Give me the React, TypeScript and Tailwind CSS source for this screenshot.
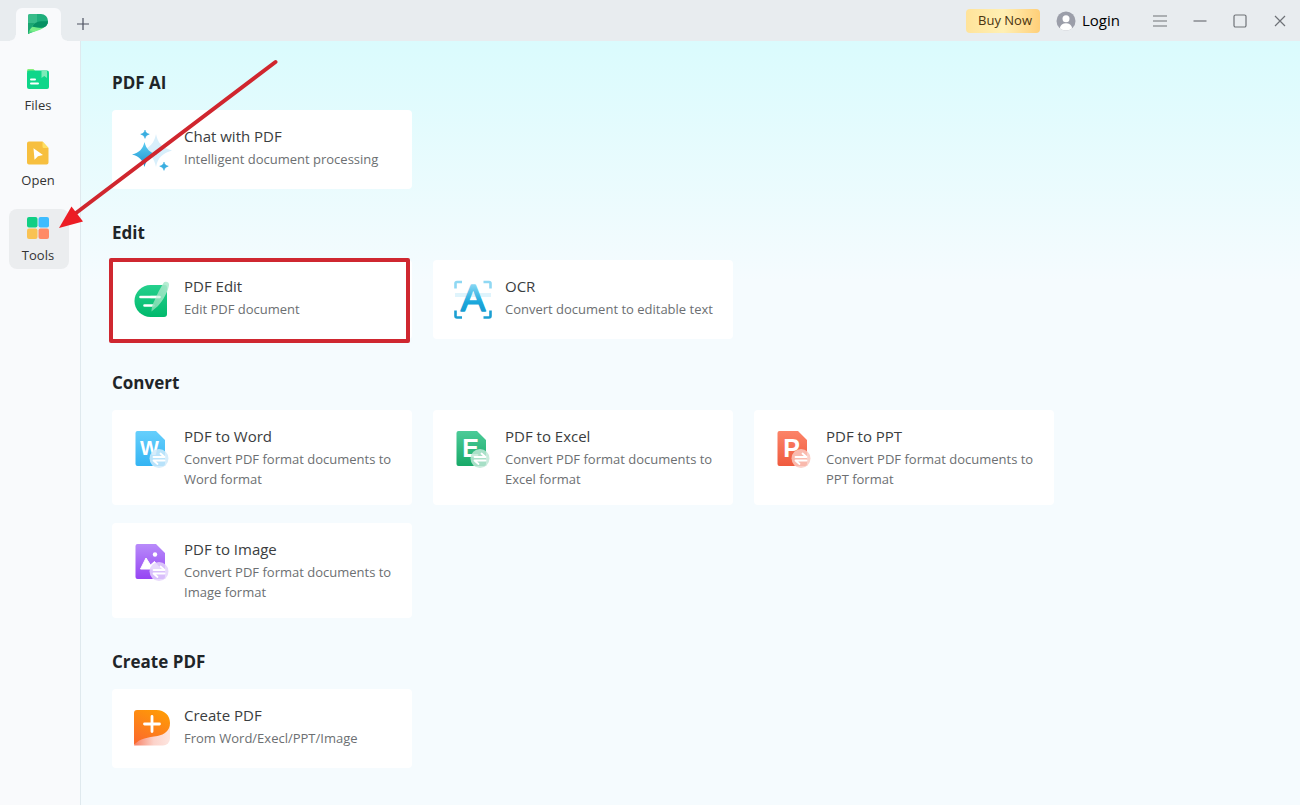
import type { ReactNode } from 'react';
import clsx from 'clsx';

type Tool = {
  title: string;
  description: string;
  icon: ReactNode;
  highlighted?: boolean;
};

type Section = {
  heading: string;
  tools: Tool[];
};

const Logo = () => (
  <svg viewBox="0 0 20 20" className="w-5 h-5" aria-hidden="true">
    <defs>
      <linearGradient id="logo-tail" x1="0" y1="1" x2="1" y2="0">
        <stop offset="0" stopColor="#27c46c" />
        <stop offset=".4" stopColor="#7df08a" />
        <stop offset="1" stopColor="#5fe57f" />
      </linearGradient>
    </defs>
    <path d="M0 20V2a2 2 0 0 1 2-2h11a7 7 0 0 1 7 7c0 3.500-2 5.700-5 6.800z" fill="#1fae7c" />
    <path d="M0 20c1-4 2.500-6 5-7.500 3 .8 7 1.300 11 .9-2 1.600-4.500 2.600-7.500 3.600C5.600 18 2.500 18.500 0 20z" fill="url(#logo-tail)" />
    <path d="M4.500 12.600C6 9 9 7.300 13 7.200h7c-.1 3-2 5.500-4.500 6.300-4 .5-8 .1-11-.9z" fill="#079163" />
    <path d="M0 20V2a2 2 0 0 1 2-2h7v8C5.500 9.500 2.500 13 0 20z" fill="#3fbf8d" opacity=".8" />
    <path d="M0 20V9h7C4 11.500 1.500 15 0 20z" fill="#14a06c" opacity=".8" />
  </svg>
);

const FilesIcon = () => (
  <svg viewBox="0 -1 24 24" className="w-6 h-6" aria-hidden="true">
    <path d="M1 5V3.500C1 2.600 1.600 2 2.500 2h5L10 5z" fill="#86ef7c" />
    <rect x="1" y="3.500" width="22" height="18.500" rx="2" fill="#0fd68a" />
    <path d="M15.500 3.500h5.500V11l-2.700-2-2.800 2z" fill="#7cebb9" />
    <path d="M5 12.500h4M5 16.500h7" stroke="#fff" strokeWidth="2" strokeLinecap="round" />
  </svg>
);

const OpenIcon = () => (
  <svg viewBox="0 0 24 24" className="w-6 h-6" aria-hidden="true">
    <path d="M3 .5h13.500L22.500 7v14.500a2 2 0 0 1-2 2H3a2 2 0 0 1-2-2v-19a2 2 0 0 1 2-2z" fill="#f7bf3f" />
    <path d="M16.500 .5 22.500 7h-4.500a1.500 1.500 0 0 1-1.500-1.500z" fill="#ffdf62" />
    <path d="M7.500 7.200 17 14l-5 1.200-3.500 3.600z" fill="#fff" />
  </svg>
);

const ToolsIcon = () => (
  <svg viewBox="0 0 24 24" className="w-6 h-6" aria-hidden="true">
    <rect x="1" y="1" width="10.500" height="10.500" rx="2" fill="#11cf84" />
    <rect x="12.500" y="1" width="10.500" height="10.500" rx="2" fill="#3ebcff" />
    <rect x="1" y="12.500" width="10.500" height="10.500" rx="2" fill="#f9c254" />
    <rect x="12.500" y="12.500" width="10.500" height="10.500" rx="2" fill="#ff8a66" />
  </svg>
);

const ChatIcon = () => (
  <svg viewBox="0 0 40 44" className="w-10 h-11" aria-hidden="true">
    <defs>
      <linearGradient id="chat-star" x1="0" y1="0" x2="0" y2="1">
        <stop offset="0" stopColor="#5bcdf3" />
        <stop offset="1" stopColor="#1f93cf" />
      </linearGradient>
    </defs>
    <path d="M24 4c1.800 9 6 13.500 16 16.500-10 3-14.200 7.500-16 16.500-1.800-9-6-13.500-14-16.500 8-3 12.200-7.500 14-16.500z" fill="#d8effb" />
    <path d="M12.500 12c1.800 7 5 10.500 12.500 12.500-7.500 2-10.700 5.500-12.500 12.500C10.700 30 7.500 26.500 0 24.500c7.500-2 10.700-5.500 12.500-12.500z" fill="url(#chat-star)" />
    <path d="M13 0c.8 2.600 1.700 3.400 4.300 4.200-2.600.8-3.500 1.600-4.300 4.200-.8-2.600-1.700-3.400-4.300-4.200C11.300 3.400 12.200 2.600 13 0z" fill="#3aaee0" stroke="#3aaee0" strokeWidth=".5" />
    <path d="M32 32c.8 2.600 1.700 3.400 4.300 4.200-2.600.8-3.500 1.600-4.300 4.200-.8-2.600-1.700-3.400-4.300-4.200 2.600-.8 3.500-1.600 4.300-4.200z" fill="#3aaee0" stroke="#3aaee0" strokeWidth=".5" />
  </svg>
);

const EditIcon = () => (
  <svg viewBox="0 0 40 40" className="w-10 h-10" aria-hidden="true">
    <defs>
      <linearGradient id="edit-body" x1="0" y1="0" x2="0" y2="1">
        <stop offset="0" stopColor="#25d08d" />
        <stop offset="1" stopColor="#00b96c" />
      </linearGradient>
      <linearGradient id="edit-pen" x1="1" y1="0" x2="0" y2="1">
        <stop offset="0" stopColor="#b2ecd0" />
        <stop offset="1" stopColor="#7ddcb0" />
      </linearGradient>
    </defs>
    <path d="M18.500 5H33a2 2 0 0 1 2 2v27a3 3 0 0 1-3 3H18.500a16 16 0 0 1 0-32z" fill="url(#edit-body)" />
    <path d="M8.500 17h19M12.500 25.500h9" stroke="#fff" strokeWidth="2.600" strokeLinecap="round" />
    <path d="M31.500 3c1.500-2.500 6.500-1.500 5.500 2.500-1.500 7-6 15-11 20.500l-6.500 5.500c0-4 1-7 3-11 2.500-6 5.500-12 9-17.500z" fill="url(#edit-pen)" opacity=".88" />
    <path d="M19 17h8.500" stroke="#fff" strokeWidth="2.600" strokeLinecap="round" opacity=".6" />
  </svg>
);

const OcrIcon = () => (
  <svg viewBox="0 0 40 40" className="w-10 h-10 overflow-visible" aria-hidden="true">
    <defs>
      <linearGradient id="ocr-letter" gradientUnits="userSpaceOnUse" x1="0" y1="4" x2="0" y2="34">
        <stop offset="0" stopColor="#8ad8f4" />
        <stop offset=".6" stopColor="#1ba8dc" />
        <stop offset="1" stopColor="#1697cd" />
      </linearGradient>
    </defs>
    <rect x="2" y="13" width="36" height="4" fill="#dff4fc" />
    <path d="M2.500 8.500V3.500a1.500 1.500 0 0 1 1.500-1.500h5M30.500 2h5.500a1.500 1.500 0 0 1 1.500 1.500v5" fill="none" stroke="#8fd8f3" strokeWidth="2.600" />
    <path d="M2.500 30.500v5.500a1.500 1.500 0 0 0 1.500 1.500h5M30.500 37.500h5.500a1.500 1.500 0 0 0 1.500-1.500v-5.500" fill="none" stroke="#1b9fd2" strokeWidth="2.600" />
    <text
      x="20"
      y="31"
      textAnchor="middle"
      fontSize="37"
      fontWeight="400"
      fill="url(#ocr-letter)"
      stroke="url(#ocr-letter)"
      strokeWidth="1.400"
      strokeLinejoin="round"
      className="font-['Liberation_Sans',sans-serif]"
    >
      A
    </text>
  </svg>
);

// Sheet with a cut corner and the round "swap" badge, shared by all converters
const ConvertIcon = ({ id, from, to, badge, children }: { id: string; from: string; to: string; badge: string; children: ReactNode }) => (
  <svg viewBox="0 0 40 40" className="w-10 h-10" aria-hidden="true">
    <defs>
      <linearGradient id={id} x1="0" y1="0" x2="0" y2="1">
        <stop offset="0" stopColor={from} />
        <stop offset="1" stopColor={to} />
      </linearGradient>
    </defs>
    <path d="M5.500 1H24l9 9v24a2 2 0 0 1-2 2H5.500a2 2 0 0 1-2-2V3a2 2 0 0 1 2-2z" fill={`url(#${id})`} />
    {children}
    <circle cx="27" cy="28.500" r="9.500" fill={badge} opacity=".85" />
    <path d="M21.500 27h11l-4-3.500M32.500 30.500h-11l4 3.500" fill="none" stroke="#fff" strokeWidth="1.800" strokeLinecap="round" strokeLinejoin="round" />
  </svg>
);

const SheetLetter = ({ size, baseline, children }: { size: number; baseline: number; children: string }) => (
  <text x="17.500" y={baseline} textAnchor="middle" fontSize={size} fontWeight="700" fill="#fff" className="font-['Liberation_Sans',sans-serif]">
    {children}
  </text>
);

const CreateIcon = () => (
  <svg viewBox="0 1 40 40" className="w-10 h-10" aria-hidden="true">
    <defs>
      <linearGradient id="create-body" x1=".7" y1="0" x2=".2" y2="1">
        <stop offset="0" stopColor="#ff9a06" />
        <stop offset="1" stopColor="#fb6a2c" />
      </linearGradient>
      <linearGradient id="create-fold" x1="0" y1="0" x2="1" y2="0">
        <stop offset="0" stopColor="#f77f62" />
        <stop offset=".55" stopColor="#fcd3ca" />
        <stop offset="1" stopColor="#fde6e1" />
      </linearGradient>
    </defs>
    <path d="M2 37.500 9 25l29-8v13.500a7 7 0 0 1-7 7z" fill="url(#create-fold)" />
    <path d="M5 2h19.500C32.500 2 38 7.500 38 15s-5.500 11.500-12.500 13C16 29.500 8 30 2 37V5a3 3 0 0 1 3-3z" fill="url(#create-body)" />
    <path d="M20 8.500v15M12.500 16h15" stroke="#fff" strokeWidth="2.800" strokeLinecap="round" />
  </svg>
);

const sections: Section[] = [
  {
    heading: 'PDF AI',
    tools: [{ title: 'Chat with PDF', description: 'Intelligent document processing', icon: <ChatIcon /> }],
  },
  {
    heading: 'Edit',
    tools: [
      { title: 'PDF Edit', description: 'Edit PDF document', icon: <EditIcon />, highlighted: true },
      { title: 'OCR', description: 'Convert document to editable text', icon: <OcrIcon /> },
    ],
  },
  {
    heading: 'Convert',
    tools: [
      {
        title: 'PDF to Word',
        description: 'Convert PDF format documents to Word format',
        icon: (
          <ConvertIcon id="sheet-word" from="#66cffc" to="#33b4f3" badge="#cfeafa">
            <SheetLetter size={20} baseline={25}>W</SheetLetter>
          </ConvertIcon>
        ),
      },
      {
        title: 'PDF to Excel',
        description: 'Convert PDF format documents to Excel format',
        icon: (
          <ConvertIcon id="sheet-excel" from="#4ccb98" to="#17a968" badge="#bfe8d6">
            <SheetLetter size={25} baseline={27}>E</SheetLetter>
          </ConvertIcon>
        ),
      },
      {
        title: 'PDF to PPT',
        description: 'Convert PDF format documents to PPT format',
        icon: (
          <ConvertIcon id="sheet-ppt" from="#fc8468" to="#ef5a3e" badge="#fac9c0">
            <SheetLetter size={25} baseline={27}>P</SheetLetter>
          </ConvertIcon>
        ),
      },
      {
        title: 'PDF to Image',
        description: 'Convert PDF format documents to Image format',
        icon: (
          <ConvertIcon id="sheet-image" from="#b88bfa" to="#9645f3" badge="#e4d3fb">
            <circle cx="23" cy="11.500" r="2.200" fill="#fff" />
            <path d="M8.500 26 14 15l4.500 7 4-3.500 6 7.500z" fill="#fff" stroke="#fff" strokeLinejoin="round" />
          </ConvertIcon>
        ),
      },
    ],
  },
  {
    heading: 'Create PDF',
    tools: [{ title: 'Create PDF', description: 'From Word/Execl/PPT/Image', icon: <CreateIcon /> }],
  },
];

const navItems = [
  { label: 'Files', icon: <FilesIcon />, active: false },
  { label: 'Open', icon: <OpenIcon />, active: false },
  { label: 'Tools', icon: <ToolsIcon />, active: true },
];

const windowControls = [
  { label: 'Menu', path: 'M1 3h14M1 8h14M1 13h14' },
  { label: 'Minimize', path: 'M1.500 8h13' },
  { label: 'Maximize', path: 'M3.500 2h9A1.500 1.500 0 0 1 14 3.500v9a1.500 1.500 0 0 1-1.500 1.500h-9A1.500 1.500 0 0 1 2 12.500v-9A1.500 1.500 0 0 1 3.500 2z' },
  { label: 'Close', path: 'M3 3l10 10M13 3 3 13' },
];

const TitleBar = () => (
  <header className="h-[41px] bg-[#e8ecef] flex items-center justify-between">
    <div className="flex self-stretch items-end pl-4">
      <button aria-label="Home" className="relative w-[45px] h-[33px] pb-0.5 pr-0.5 flex items-center justify-center bg-[#f9fafc] rounded-t-md">
        <span className="absolute bottom-0 -left-1.5 w-1.5 h-1.5 bg-[radial-gradient(circle_at_0_0,transparent_5px,#f9fafc_6px)]" />
        <span className="absolute bottom-0 -right-1.5 w-1.5 h-1.5 bg-[radial-gradient(circle_at_100%_0,transparent_5px,#f9fafc_6px)]" />
        <Logo />
      </button>
      <button aria-label="New tab" className="w-11 h-[33px] pb-0.5 flex items-center justify-center">
        <svg viewBox="0 0 14 14" className="w-3.5 h-3.5" fill="none" stroke="#4c5160" strokeWidth="1.200">
          <path d="M7 1v12M1 7h12" />
        </svg>
      </button>
    </div>

    <div className="flex items-center">
      <button className="w-[74px] h-6 rounded bg-linear-to-r from-[#ffe39a] via-[#fff0b4] to-[#ffcf78] text-[13px] text-[#4a3410] text-center pl-1">
        Buy Now
      </button>
      <button className="flex items-center gap-1.5 ml-4 mr-5 text-[15px] text-black">
        <svg viewBox="0 0 20 20" className="w-5 h-5" aria-hidden="true">
          <circle cx="10" cy="10" r="9.500" fill="#9b9ea9" />
          <circle cx="10" cy="7.800" r="3.500" fill="#fff" />
          <path d="M3.800 17.200c.6-3.300 3-5 6.200-5s5.600 1.700 6.200 5A9.500 9.500 0 0 1 10 19.500a9.500 9.500 0 0 1-6.200-2.300z" fill="#fff" />
        </svg>
        Login
      </button>
      {windowControls.map(({ label, path }) => (
        <button key={label} aria-label={label} className="w-10 h-10 flex items-center justify-center">
          <svg viewBox="0 0 16 16" className="w-4 h-4" fill="none" stroke="#6e7277" strokeWidth="1.200">
            <path d={path} />
          </svg>
        </button>
      ))}
    </div>
  </header>
);

const Sidebar = () => (
  <nav className="w-[81px] shrink-0 bg-[#f9fafc] border-r border-[#dfe9ee] pt-[18px] pl-[9px] flex flex-col gap-[15px]">
    {navItems.map(({ label, icon, active }) => (
      <button
        key={label}
        className={clsx('w-[60px] h-[60px] rounded-lg flex flex-col items-center pt-[7px] pr-0.5 text-[13px] leading-5 text-[#333]', active && 'bg-[#ebedef]')}
      >
        {icon}
        <span className="mt-[5px]">{label}</span>
      </button>
    ))}
  </nav>
);

const ToolCard = ({ title, description, icon, highlighted }: Tool) => (
  <button className="relative min-h-[79px] flex items-start gap-3 pl-5 pr-4 bg-white rounded text-left">
    <span className="w-10 shrink-0 pt-5">{icon}</span>
    <span className="pt-[14px] pb-4">
      <span className="block text-[15px] leading-6 text-[#3a3d40]">{title}</span>
      <span className="block mt-px text-[13px] leading-5 text-[#6c6f72]">{description}</span>
    </span>
    {highlighted && <span className="absolute -left-[3px] right-[2px] -top-0.5 -bottom-1 border-4 border-[#cf2730] rounded-xs" />}
  </button>
);

const Annotation = () => (
  <svg viewBox="0 0 220 172" className="absolute left-[58px] top-[58px] w-[220px] h-[172px] pointer-events-none" aria-hidden="true">
    <path d="M217.500 4 18 155" stroke="#d0262e" strokeWidth="4" strokeLinecap="round" />
    <path d="M1 170 13.500 148.500 25 163.500z" fill="#ec1c24" />
  </svg>
);

export default function App() {
  return (
    <div className="relative min-h-screen flex flex-col font-['Open_Sans','Noto_Sans',sans-serif]">
      <TitleBar />
      <div className="flex-1 flex">
        <Sidebar />
        <main className="flex-1 bg-[#f5fbfe] bg-[linear-gradient(to_bottom,#dafbfd_0,#f5fbfe_240px)] pt-7 pl-[31px] pr-8 pb-9 flex flex-col gap-[30px]">
          {sections.map(({ heading, tools }) => (
            <section key={heading}>
              <h2 className="mb-[13px] text-[17px] leading-7 font-bold text-[#1f2528]">{heading}</h2>
              <div className="grid grid-cols-[repeat(auto-fill,300px)] gap-x-[21px] gap-y-[18px]">
                {tools.map((tool) => (
                  <ToolCard key={tool.title} {...tool} />
                ))}
              </div>
            </section>
          ))}
        </main>
      </div>
      <Annotation />
    </div>
  );
}
